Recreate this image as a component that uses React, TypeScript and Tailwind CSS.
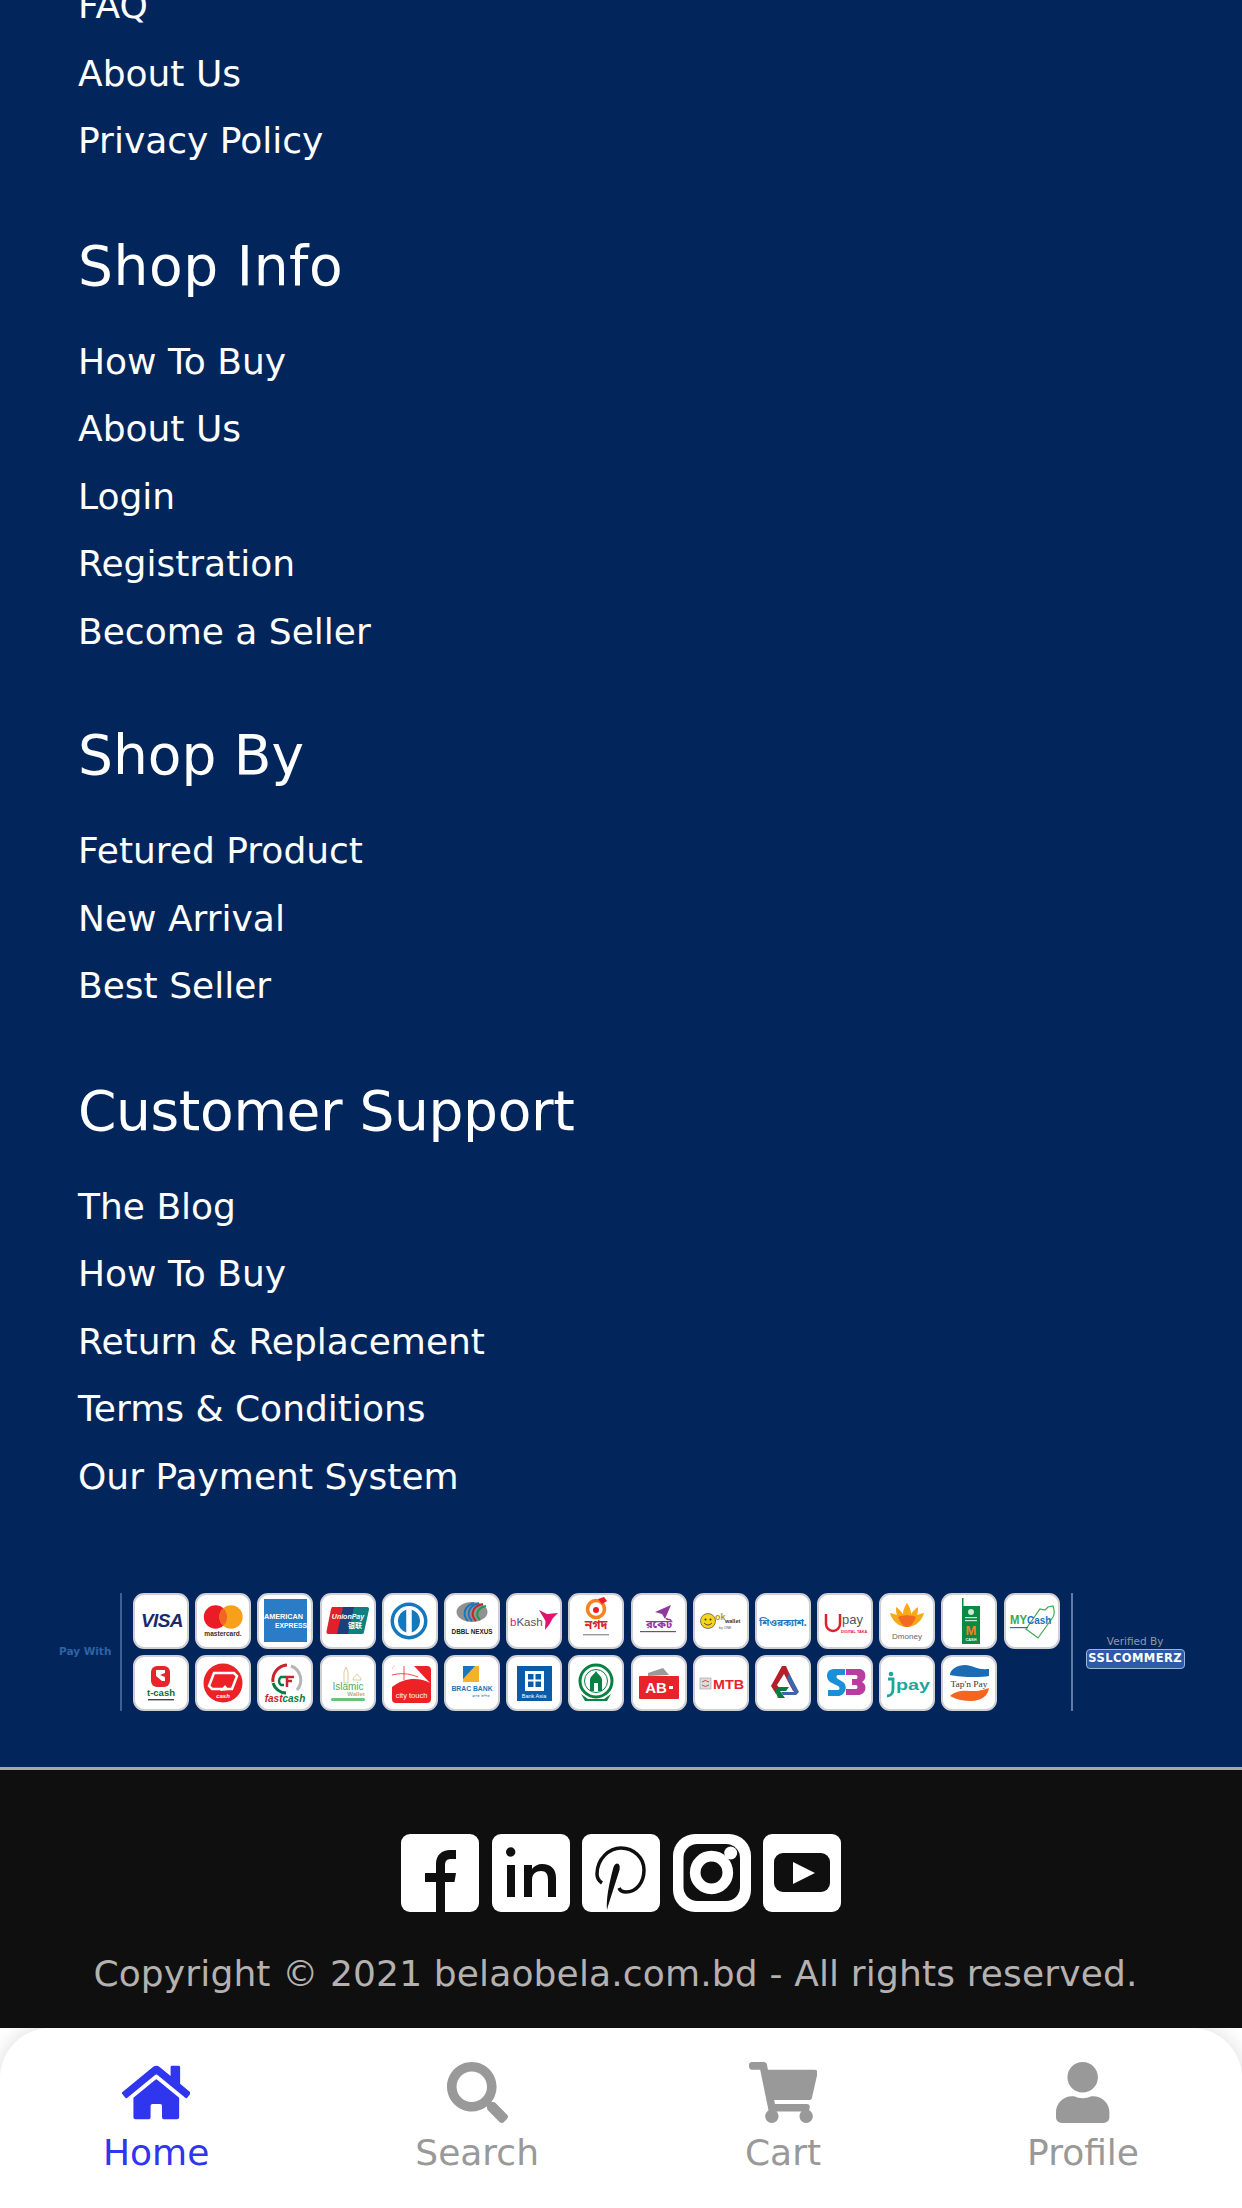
import type { ReactNode } from "react";
import { FaHome, FaSearch, FaShoppingCart, FaUser } from "react-icons/fa";

const sections = [
  { title: "", wrap: "mb-[51px]", track: "", links: ["FAQ", "About Us", "Privacy Policy"] },
  { title: "Shop Info", wrap: "mb-[50px]", track: "tracking-[0.6px]", links: ["How To Buy", "About Us", "Login", "Registration", "Become a Seller"] },
  { title: "Shop By", wrap: "mb-[51px]", track: "", links: ["Fetured Product", "New Arrival", "Best Seller"] },
  { title: "Customer Support", wrap: "mb-[50px]", track: "tracking-[-0.35px]", links: ["The Blog", "How To Buy", "Return & Replacement", "Terms & Conditions", "Our Payment System"] },
];

const logos: ReactNode[] = [
  // row 1
  <text x="29" y="34" textAnchor="middle" fontSize="19" fontWeight="700" fontStyle="italic" fill="#1a2a6c" letterSpacing="-0.6">VISA</text>,
  <>
    <circle cx="20.5" cy="24" r="11.7" fill="#eb1c26" />
    <circle cx="36" cy="24" r="11.7" fill="#f9a01b" />
    <path d="M28.2 15.3a11.7 11.7 0 0 1 0 17.4a11.7 11.7 0 0 1 0-17.4z" fill="#f26522" />
    <text x="28" y="43" textAnchor="middle" fontSize="6.6" fontWeight="700" fill="#333">mastercard.</text>
  </>,
  <>
    <rect x="7" y="6" width="43" height="43" fill="#2a7cc7" />
    <text x="7" y="26" fontSize="7.6" fontWeight="700" fill="#fff" textLength="39" lengthAdjust="spacingAndGlyphs">AMERICAN</text>
    <text x="18" y="35" fontSize="7.6" fontWeight="700" fill="#fff" textLength="32" lengthAdjust="spacingAndGlyphs">EXPRESS</text>
  </>,
  <>
    <path d="M12 14h13l-6 27H8a2 2 0 0 1-1.500-2.500L11 16z" fill="#e2202c" />
    <path d="M23 14h13l-6 27H17z" fill="#1f3f7a" />
    <path d="M34 14h13a2 2 0 0 1 2 2.500L44 39a2 2 0 0 1-2 2H28z" fill="#0f7f80" />
    <text x="28" y="26" textAnchor="middle" fontSize="7" fontWeight="700" fontStyle="italic" fill="#fff">UnionPay</text>
    <text x="35" y="35" textAnchor="middle" fontSize="7" fontWeight="700" fill="#fff" fontFamily="'Noto Sans CJK SC', sans-serif">银联</text>
  </>,
  <>
    <circle cx="27" cy="28" r="18.5" fill="#1478bd" />
    <circle cx="27" cy="28" r="15" fill="#fff" />
    <path d="M24.500 16.500a12 12 0 0 0 0 23zM29.500 16.500a12 12 0 0 1 0 23z" fill="#1478bd" />
    <rect x="24.500" y="14" width="5" height="28" fill="#fff" />
  </>,
  <>
    <ellipse cx="28" cy="19" rx="15.500" ry="10" fill="#8f9193" />
    <path d="M24 28c-6-6-4-15 6-18M28 28c-6-6-4-15 7-18" fill="none" stroke="#1c75bc" strokeWidth="2" />
    <path d="M32 28c-6-6-4-15 7-17" fill="none" stroke="#c2272d" strokeWidth="2" />
    <path d="M36 27c-5-5-3-12 6-14" fill="none" stroke="#1a9b4b" strokeWidth="2" />
    <text x="28" y="41" textAnchor="middle" fontSize="6.300" fontWeight="700" fill="#222">DBBL NEXUS</text>
  </>,
  <>
    <text x="4" y="33" fontSize="11.500" fill="#555"><tspan fill="#e2136e">b</tspan>Kash</text>
    <path d="M33 17l8 4 11-1-5 5-4 7-4 5 .5-9z" fill="#e2136e" />
  </>,
  <>
    <circle cx="28" cy="16" r="8.500" fill="none" stroke="#f5821f" strokeWidth="3.500" />
    <circle cx="28" cy="17" r="3" fill="#ec1c24" />
    <path d="M30 6l6-2 3 4-5 3z" fill="#ec1c24" />
    <text x="28" y="36" textAnchor="middle" fontSize="12" fontWeight="700" fill="#d8232a" fontFamily="'Noto Sans Bengali', 'Noto Sans', sans-serif">নগদ</text>
    <rect x="15" y="41" width="26" height="1.400" fill="#999" />
  </>,
  <>
    <path d="M24 19l16-7-6 14-3-5z" fill="#8e3a9d" />
    <text x="28" y="35" textAnchor="middle" fontSize="11" fontWeight="700" fill="#8e3a9d" fontFamily="'Noto Sans Bengali', 'Noto Sans', sans-serif">রকেট</text>
    <rect x="9" y="38" width="36" height="1.200" fill="#8e3a9d" />
  </>,
  <>
    <circle cx="15" cy="28" r="7.500" fill="#f7d417" stroke="#333" strokeWidth="0.600" />
    <circle cx="12.500" cy="26.500" r="1" fill="#333" />
    <circle cx="17.500" cy="26.500" r="1" fill="#333" />
    <path d="M11 30q4 4 8 0" fill="none" stroke="#333" strokeWidth="0.800" />
    <text x="22" y="27" fontSize="9" fontWeight="700" fill="#b59a00">ok</text>
    <text x="32" y="30" fontSize="5.500" fontWeight="700" fill="#333">wallet</text>
    <text x="26" y="36" fontSize="3.500" fill="#555">by ONE</text>
  </>,
  <text x="28" y="33" textAnchor="middle" fontSize="10" fontWeight="700" fill="#1f78c1" fontFamily="'Noto Sans Bengali', 'Noto Sans', sans-serif">শিওরক্যাশ.</text>,
  <>
    <path d="M9 21v10a7 7 0 0 0 14 0V21" fill="none" stroke="#e2202c" strokeWidth="2.500" />
    <text x="25" y="31" fontSize="13" fill="#555">pay</text>
    <text x="24" y="40" fontSize="3.800" fontWeight="700" fill="#e2202c">DIGITAL TAKA</text>
  </>,
  <>
    <path d="M28 10c3 4 4 8 4 11 2-3 4-5 7-7 0 3 0 6-1 8 3-1 5-2 7-2-2 8-9 14-17 14S13 28 11 20c2 0 4 1 7 2-1-2-1-5-1-8 3 2 5 4 7 7 0-3 1-7 4-11z" fill="#f9a81a" />
    <path d="M28 22c2 1 6 0 9 2-2 5-5 10-9 10s-7-5-9-10c3-2 7-1 9-2z" fill="#f26a21" />
    <text x="28" y="46" textAnchor="middle" fontSize="8" fill="#666">Dmoney</text>
  </>,
  <>
    <rect x="21" y="5" width="1.500" height="10" fill="#0a8a43" />
    <rect x="21" y="13" width="18" height="38" fill="#0a8a43" />
    <circle cx="30" cy="19" r="3" fill="#cde8d4" />
    <rect x="24" y="24" width="12" height="1.200" fill="#cde8d4" />
    <rect x="24" y="27" width="12" height="1.200" fill="#cde8d4" />
    <text x="30" y="42" textAnchor="middle" fontSize="13" fontWeight="700" fill="#f58220">M</text>
    <text x="30" y="48" textAnchor="middle" fontSize="3.800" fontWeight="700" fill="#fff">CASH</text>
  </>,
  <>
    <path d="M22 36l12 9 15-21c2-3 1-8 0-11l-5 1-3 3-5-1z" fill="none" stroke="#3cab4a" strokeWidth="1.200" />
    <text x="6" y="31" fontSize="12" fontWeight="700" fill="#3cab4a" textLength="17" lengthAdjust="spacingAndGlyphs">MY</text>
    <text x="23" y="31" fontSize="10" fontWeight="700" fill="#1b75bb">Cash</text>
    <rect x="6" y="34" width="18" height="1.200" fill="#1b75bb" />
  </>,
  // row 2
  <>
    <rect x="18" y="11" width="19" height="21" rx="6" fill="#e8232a" />
    <path d="M23 15h9v3l-5 2 5 2v4h-3l-6-5z" fill="#fff" />
    <text x="28" y="41" textAnchor="middle" fontSize="9.500" fontWeight="700" fill="#0b6b3a">t-cash</text>
    <rect x="15" y="44" width="26" height="1.400" fill="#444" />
  </>,
  <>
    <circle cx="28" cy="28" r="19.500" fill="#ec2227" />
    <path d="M19 18h20l3 3-5 13H17l-3-3z" fill="none" stroke="#fff" strokeWidth="2.500" />
    <path d="M25 36l5-6 4 5z" fill="#fff" />
    <text x="28" y="43" textAnchor="middle" fontSize="6" fontWeight="700" fontStyle="italic" fill="#fff">cash</text>
  </>,
  <>
    <path d="M30 10a15 15 0 0 0-14 17" fill="none" stroke="#c8242b" strokeWidth="3" />
    <path d="M16 28a14 14 0 0 0 13 10" fill="none" stroke="#0b7a40" strokeWidth="3" />
    <path d="M34 11a15 15 0 0 1 6 24" fill="none" stroke="#b5b5b5" strokeWidth="3" />
    <path d="M29 22h-5a5 5 0 0 0 0 8h3" fill="none" stroke="#0b7a40" strokeWidth="2.500" />
    <path d="M30 32V22h7M30 26h5" fill="none" stroke="#c8242b" strokeWidth="2.500" />
    <text x="28" y="47" textAnchor="middle" fontSize="10" fontWeight="700" fontStyle="italic" fill="#c8242b">fast<tspan fill="#0b7a40">cash</tspan></text>
  </>,
  <>
    <path d="M26 12l2 5v11h-4V17z" fill="none" stroke="#e0c9a0" strokeWidth="1" />
    <path d="M33 25c0-3 3-4 4-6 1 2 4 3 4 6z" fill="none" stroke="#e0c9a0" strokeWidth="1" />
    <text x="28" y="35" textAnchor="middle" fontSize="10" fill="#4cae5b">Islamic</text>
    <text x="36" y="41" textAnchor="middle" fontSize="6" fontWeight="700" fill="#bbaa88">Wallet</text>
    <rect x="11" y="43" width="34" height="3" rx="1.500" fill="#6cc27a" />
  </>,
  <>
    <rect x="10" y="11" width="39" height="37" rx="4" fill="#ec2227" />
    <path d="M10 15q0-4 4-4h18l16 17c-10-6-26-6-38 4z" fill="#fff" />
    <path d="M22 11v14M10 20c8-2 16-2 26 2" fill="none" stroke="#ec2227" strokeWidth="0.800" />
    <text x="29.500" y="43" textAnchor="middle" fontSize="7.500" fill="#fff">city touch</text>
  </>,
  <>
    <rect x="19" y="11" width="16" height="16" fill="#f3b229" />
    <path d="M19 11h12l-12 13z" fill="#1b75bb" />
    <text x="28" y="36" textAnchor="middle" fontSize="6.800" fontWeight="700" fill="#1b75bb">BRAC BANK</text>
    <text x="37" y="42" textAnchor="middle" fontSize="3.500" fill="#1b75bb">ব্র্যাক ব্যাংক</text>
  </>,
  <>
    <rect x="11" y="11" width="35" height="35" fill="#0a5cab" />
    <path d="M19 16h19v20h-19z" fill="#fff" />
    <rect x="22" y="19" width="5.500" height="5.500" fill="#0a5cab" />
    <rect x="29.500" y="19" width="5.500" height="5.500" fill="#0a5cab" />
    <rect x="22" y="26.500" width="5.500" height="5.500" fill="#0a5cab" />
    <rect x="29.500" y="26.500" width="5.500" height="5.500" fill="#0a5cab" />
    <text x="28" y="43" textAnchor="middle" fontSize="5.500" fill="#fff">Bank Asia</text>
  </>,
  <>
    <circle cx="28" cy="26" r="16" fill="none" stroke="#0a8043" strokeWidth="3" />
    <circle cx="28" cy="26" r="11.500" fill="none" stroke="#0a8043" strokeWidth="1" />
    <path d="M22 36V25c0-4 4-5 6-9 2 4 6 5 6 9v11h-4V28h-4v8z" fill="#0a8043" />
    <path d="M13 39l7 5h16l7-5-4 7H17z" fill="#0a8043" />
  </>,
  <>
    <path d="M17 18l15-5 6 7-21 1z" fill="#999" />
    <rect x="8" y="21" width="40" height="23" rx="1" fill="#e8232a" />
    <text x="25" y="38" textAnchor="middle" fontSize="15" fontWeight="700" fill="#fff">AB</text>
    <rect x="38" y="31" width="4" height="3" fill="#fff" />
  </>,
  <>
    <rect x="7" y="23" width="11" height="11" fill="#ddd" stroke="#999" strokeWidth="0.600" />
    <path d="M9 27q3-3 7 0M9 30q3 3 7 0" fill="none" stroke="#c2272d" strokeWidth="0.800" />
    <text x="20" y="34" fontSize="13" fontWeight="700" fill="#e8232a" textLength="31" lengthAdjust="spacingAndGlyphs">MTB</text>
  </>,
  <>
    <path d="M27 11l-11 20 5 8 4-5-3-4 7-11 9 17h4L31 11z" fill="#b3202a" />
    <path d="M34 18l10 19-3 3H28l-2-3h13l-7-13z" fill="#3f63ad" />
    <path d="M20 36l3-4h11l-3 4h-6l5 7h-7z" fill="#0a7a40" />
  </>,
  <>
    <path d="M10 21c0-6 4-7 8-7h10v6h-7c-2 0-2 3 0 4l5 3c5 3 3 14-5 14H11v-6h10c2 0 2-3 0-4l-6-3c-3-1-5-4-5-7z" fill="#1b8fd8" />
    <path d="M29 14h13c8 0 8 11 3 13 6 3 4 13-4 13H29v-6h10c2 0 2-4 0-4h-4v-6h4c2 0 2-4 0-4H29z" fill="#b93da0" />
  </>,
  <>
    <circle cx="12" cy="19" r="2.300" fill="#1aa79c" />
    <path d="M9 24h5v10c0 5-3 7-6 7" fill="none" stroke="#1aa79c" strokeWidth="2.800" />
    <text x="17" y="35" fontSize="15" fontWeight="700" fill="#1aa79c" textLength="34" lengthAdjust="spacingAndGlyphs">pay</text>
  </>,
  <>
    <path d="M9 20c0-6 8-10 15-10 8 0 10 5 24 4v7c-9 2-30 1-39-1z" fill="#1b6cb5" />
    <path d="M9 41c8-7 16-5 24-5 7 0 11-2 15-3-1 8-8 13-18 13-7 0-14-1-21-5z" fill="#f4661f" />
    <text x="28" y="32" textAnchor="middle" fontSize="8.800" fill="#333" fontFamily="'Liberation Serif', serif" textLength="37" lengthAdjust="spacingAndGlyphs">Tap'n Pay</text>
  </>,
];

function PayCard({ children }: { children: ReactNode }) {
  return (
    <div className="h-14 w-14 rounded-[11px] border-2 border-[#d0d0d4] bg-white">
      <svg viewBox="0 0 56 56" className="-m-[2px] h-14 w-14 font-['Liberation_Sans',sans-serif]">
        {children}
      </svg>
    </div>
  );
}

function Social({ children, rx = 9 }: { children: ReactNode; rx?: number }) {
  return (
    <svg viewBox="0 0 78 78" className="h-[78px] w-[78px]">
      <rect width="78" height="78" rx={rx} fill="#fff" />
      {children}
    </svg>
  );
}

const ink = "#0f0f0f";

function NavItem({ icon, label, active }: { icon: ReactNode; label: string; active?: boolean }) {
  return (
    <div className={`flex flex-col items-center ${active ? "text-[#3035ee]" : "text-[#999999]"}`}>
      {icon}
      <span className="mt-[3px] text-[36px] leading-[53px]">{label}</span>
    </div>
  );
}

export default function App() {
  return (
    <div className="flex h-[2208px] flex-col overflow-hidden bg-[#02265b] font-['DejaVu_Sans',sans-serif]">
      <footer className="-mt-[28px] flex flex-1 flex-col">
        <div className="pl-[78px] text-white">
          {sections.map((section) => (
            <div key={section.title} className={section.wrap}>
              {section.title && (
                <h3 className={`mb-[22px] text-[55px] leading-[80px] font-normal ${section.track}`}>{section.title}</h3>
              )}
              <ul>
                {section.links.map((link) => (
                  <li key={link} className="text-[36px] leading-[67.5px]">
                    {link}
                  </li>
                ))}
              </ul>
            </div>
          ))}
        </div>

        <div className="mt-[33px] flex items-stretch pl-[59px]">
          <div className="flex w-[61px] items-center text-[10.5px] font-bold text-[#2f62a8]">Pay With</div>
          <div className="w-[2px] bg-[#3f6096]" />
          <div className="ml-[11px] grid grid-cols-[repeat(15,56px)] gap-x-[6.2px] gap-y-[5.6px]">
            {logos.map((logo, i) => (
              <PayCard key={i}>{logo}</PayCard>
            ))}
          </div>
          <div className="ml-[11px] w-[2px] bg-[#5f7ba6]" />
          <div className="ml-[13px] flex flex-col items-center justify-center gap-[1px]">
            <span className="text-[10.5px] leading-[13px] text-[#8e98a8]">Verified By</span>
            <span className="flex h-[20px] w-[99px] items-center justify-center rounded-[4px] border border-[#9db4dc] bg-[#2f5aa8] text-[11.5px] leading-none font-bold tracking-[0.4px] text-white">
              SSLCOMMERZ
            </span>
          </div>
        </div>

        <div className="mt-[56px] flex flex-1 flex-col items-center border-t-[3px] border-[#a8a8a8] bg-[#0f0f0f]">
          <div className="mt-[64px] flex gap-[12.5px]">
            <Social>
              <path d="M35 78V48H24V39h11v-9c0-9 6-14 14-14h6v9h-5c-4 0-6 2-6 6v8h11l-1.500 9H44v30z" fill={ink} />
            </Social>
            <Social>
              <circle cx="18.700" cy="18" r="4.700" fill={ink} />
              <rect x="15" y="31" width="8" height="32" fill={ink} />
              <path d="M32 31h8v4c2-3 6-5 10-5 9 0 14 5 14 14v19h-8V46c0-6-2-9-7-9s-9 3-9 9v17h-8z" fill={ink} />
            </Social>
            <Social>
              <path d="M20 49c-3-2-5-5-5-9 0-15 12-26 24-26 13 0 23 10 23 22 0 13-8 22-18 22-3 0-6-1.500-7-4" fill="none" stroke={ink} strokeWidth="3.500" />
              <path d="M35 29.500c3 .5 3 3.500 2.500 6.500L26 72l-1 4c-1-11 2-26 6-41 .5-3 2-5.500 4-5.500z" fill={ink} />
            </Social>
            <Social rx={22}>
              <rect x="10.500" y="10" width="56.500" height="57" rx="14" fill={ink} />
              <circle cx="38.500" cy="38.500" r="16.300" fill="none" stroke="#fff" strokeWidth="10.700" />
              <circle cx="57.700" cy="19" r="6.500" fill="#fff" />
            </Social>
            <Social>
              <rect x="11" y="19" width="56" height="39" rx="9" fill={ink} />
              <path d="M30 28l22 11-22 11z" fill="#fff" />
            </Social>
          </div>
          <p className="mt-[35px] pr-[11px] text-[36px] leading-[54px] tracking-[0.15px] text-[#b5b1b1]">
            Copyright © 2021 belaobela.com.bd - All rights reserved.
          </p>
        </div>
      </footer>

      <div className="h-[180px] shrink-0 overflow-hidden bg-white">
        <nav className="flex h-[180px] justify-around rounded-t-[50px] bg-white pt-[34px] shadow-[0_0_20px_rgba(0,0,0,0.15)]">
          <NavItem active label="Home" icon={<FaHome className="h-[61px] w-[68.6px]" />} />
          <NavItem label="Search" icon={<FaSearch className="h-[61px] w-[61px]" />} />
          <NavItem label="Cart" icon={<FaShoppingCart className="h-[61px] w-[68.6px]" />} />
          <NavItem label="Profile" icon={<FaUser className="h-[61px] w-[53.4px]" />} />
        </nav>
      </div>
    </div>
  );
}
